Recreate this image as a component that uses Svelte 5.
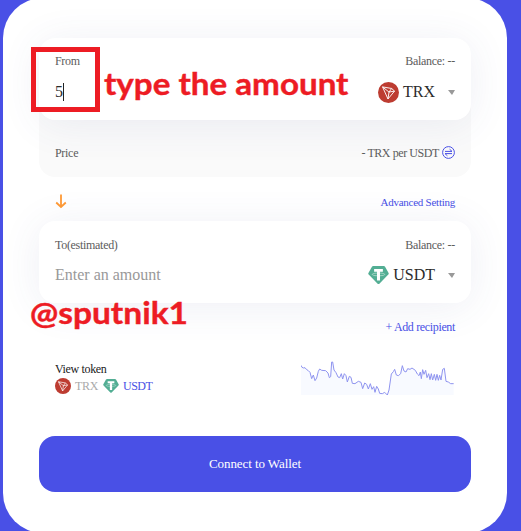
<script>
  const line = 'M33 61L36 67L41 69L45 68L49 73L55 77L60 82L65 101L70 90L75 107L80 99L85 79L89 72L95 76L107 77L114 84L118 98L122 95L125 51L128 51L132 75L138 83L144 96L149 98L154 86L158 102L163 86L168 92L172 111L178 94L183 97L187 115L195 116L205 109L213 112L218 131L224 114L230 118L235 132L241 116L246 133L251 125L255 142L260 124L265 132L269 145L277 146L284 142L292 150L297 135L304 87L310 80L314 73L319 90L325 92L332 86L337 62L342 78L348 81L353 71L360 73L366 69L376 76L382 87L387 92L391 81L394 101L398 74L402 88L407 76L411 98L416 86L420 104L424 86L428 105L433 88L437 106L441 88L445 106L449 91L453 105L458 73L463 70L468 109L475 111L482 116L491 116';
</script>

{#snippet trx(size)}
  <svg width={size} height={size} viewBox="0 0 24 24" fill="none">
    <circle cx="12" cy="12" r="12" fill="#bd3c31" />
    <path d="M5.2 5.6L15.6 7.4L18.9 10.4L11.4 19.4ZM5.2 5.6L12.6 11.5L11.4 19.4M15.6 7.4L12.6 11.5L18.9 10.4" stroke="#fff" stroke-width="1.05" stroke-linejoin="round" />
  </svg>
{/snippet}

{#snippet usdt(size)}
  <svg width={size} height={size * 0.88} viewBox="0 0 24 21">
    <path d="M4.5 .7Q5 0 6 0H18Q19 0 19.5 .7L23.5 8Q24 9 23.2 9.8L13 20.3Q12 21.2 11 20.3L.8 9.8Q0 9 .5 8Z" fill="#53ae94" />
    <path d="M7 3.4H17V6.4H13.7V16.5H10.3V6.4H7Z" fill="#fff" />
    <path d="M10.4 8C3 8.3 3 10.8 10.4 11.1M13.6 8C21 8.3 21 10.8 13.6 11.1" fill="none" stroke="#cfe9e0" stroke-width=".7" />
  </svg>
{/snippet}

<main>
  <section class="panel">
    <div class="group">
      <div class="card">
        <div class="row head"><span>From</span><span>Balance: --</span></div>
        <div class="row entry">
          <span class="value">5<i class="caret"></i></span>
          <span class="token">{@render trx(21)}<b>TRX</b><i class="arrow"></i></span>
        </div>
      </div>
      <div class="row price">
        <span>Price</span>
        <span class="rate">- TRX per USDT
          <svg width="13" height="13" viewBox="0 0 13 13" fill="none" stroke="#484fe5">
            <circle cx="6.5" cy="6.5" r="5.9" />
            <path d="M3 5.4H10L7.6 3.2M10 7.6H3L5.4 9.8" />
          </svg>
        </span>
      </div>
    </div>

    <div class="row between">
      <svg width="12" height="15" viewBox="0 0 12 15" fill="none" stroke="#ff9a35" stroke-width="1.8">
        <path d="M6 .5V13M1.2 8.5L6 13L10.8 8.5" />
      </svg>
      <span>Advanced Setting</span>
    </div>

    <div class="card to">
      <div class="row head"><span>To(estimated)</span><span>Balance: --</span></div>
      <div class="row entry">
        <span class="placeholder">Enter an amount</span>
        <span class="token">{@render usdt(21)}<b>USDT</b><i class="arrow"></i></span>
      </div>
    </div>

    <div class="recipient">+ Add recipient</div>

    <div class="row view">
      <div>
        <div class="title">View token</div>
        <div class="tokens">
          {@render trx(16)}<span class="muted">TRX</span>{@render usdt(16)}<span class="link">USDT</span>
        </div>
      </div>
      <svg class="chart" width="154" height="35" viewBox="33 48 462 105" fill="none">
        <path d={line + 'V150H33Z'} fill="#f8faff" />
        <path d={line} stroke="#8f94ef" stroke-width="3" stroke-linejoin="round" />
      </svg>
    </div>

    <button>Connect to Wallet</button>
  </section>

  <div class="frame"></div>
  <div class="note type">type the amount</div>
  <div class="note handle">@sputnik1</div>
</main>

<style>
  :global(body) { background: #4950e6; }
  main {
    position: relative;
    width: 521px;
    height: 531px;
    overflow: hidden;
    background: #4950e6;
    font: 12px/16px 'Liberation Serif', serif;
    letter-spacing: -.3px;
    color: #5c5c5c;
    white-space: nowrap;
    display: flex;
    align-items: center;
  }
  .panel {
    box-sizing: border-box;
    flex: none;
    width: 504px;
    height: 535px;
    margin-left: 3px;
    padding: 40px 36px 0;
    border-radius: 40px;
    background: #fff;
    overflow: hidden;
  }
  .row { display: flex; justify-content: space-between; align-items: center; }
  .group { border-radius: 16px; background: #fafafa; }
  .card {
    position: relative;
    box-sizing: border-box;
    height: 82px;
    padding: 15px 16px 0;
    border-radius: 16px;
    background: #fff;
    box-shadow: 0 4px 40px rgba(67, 78, 140, .09);
  }
  .card.to { padding-top: 16px; }
  .head { height: 16px; }
  .entry { height: 24px; margin-top: 11px; font-size: 16px; letter-spacing: 0; color: #2b2b2b; }
  .to .entry { margin-top: 10px; }
  .value { display: flex; align-items: center; }
  .caret { width: 1px; height: 18px; background: #222; }
  .placeholder { color: #999; }
  .token { display: flex; align-items: center; }
  .token b { font-weight: 400; margin: 0 13px 0 4.5px; }
  .arrow { border: 3.5px solid transparent; border-top: 5px solid #999; border-bottom: 0; border-left-width: 4px; }
  .price { position: relative; height: 57px; padding: 8px 16px 0; box-sizing: border-box; }
  .rate { display: flex; align-items: center; gap: 3px; letter-spacing: -.42px; }
  .between { height: 44px; padding: 5px 16px 0; box-sizing: border-box; }
  .between span, .recipient, .link { color: #484fe5; }
  .between span { font-size: 11px; letter-spacing: -.25px; }
  .recipient { position: relative; margin-top: 16px; padding-right: 16px; text-align: right; letter-spacing: -.35px; }
  .view { height: 36px; margin-top: 25px; padding: 0 16px; }
  .title { color: #222; line-height: 16px; letter-spacing: -.35px; }
  .tokens { display: flex; align-items: center; height: 18px; gap: 4px; }
  .muted { color: #aaa; margin-right: 1px; }
  .link { letter-spacing: -.55px; }
  button {
    display: block;
    width: 100%;
    height: 56px;
    margin-top: 40px;
    padding: 0;
    border: 0;
    border-radius: 16px;
    background: #4950e6;
    color: #fff;
    font: 13px 'Liberation Serif', serif;
    letter-spacing: -.08px;
  }
  .frame { position: absolute; left: 31px; top: 47px; width: 59px; height: 55px; border: 5px solid #ed1c24; }
  .note {
    position: absolute;
    color: #ed1c24;
    font: 700 31px/36px Lato, sans-serif;
    letter-spacing: 0;
    -webkit-text-stroke: .4px #ed1c24;
    transform-origin: 0 50%;
  }
  .type { left: 104px; top: 65px; transform: scaleX(1.07); }
  .handle { left: 30px; top: 294px; transform: scaleX(1.08); }
</style>
